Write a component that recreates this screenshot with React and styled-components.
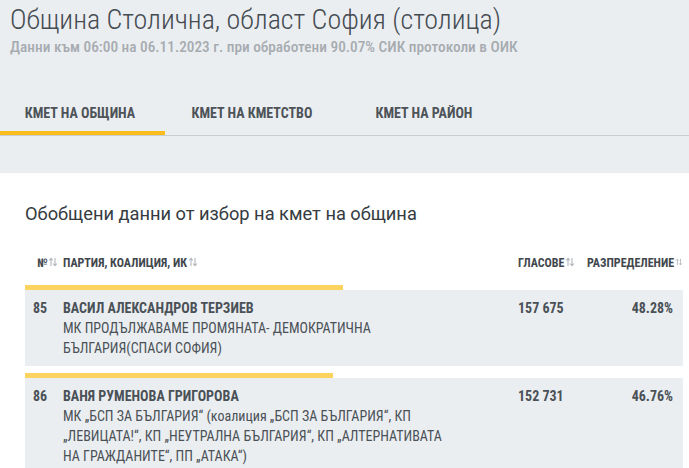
import styled, { createGlobalStyle } from "styled-components";

const candidates = [
  {
    num: 85,
    name: "ВАСИЛ АЛЕКСАНДРОВ ТЕРЗИЕВ",
    party: "МК ПРОДЪЛЖАВАМЕ ПРОМЯНАТА- ДЕМОКРАТИЧНА БЪЛГАРИЯ(СПАСИ СОФИЯ)",
    votes: "157 675",
    pct: 48.28,
  },
  {
    num: 86,
    name: "ВАНЯ РУМЕНОВА ГРИГОРОВА",
    party:
      "МК „БСП ЗА БЪЛГАРИЯ“ (коалиция „БСП ЗА БЪЛГАРИЯ“, КП „ЛЕВИЦАТА!“, КП „НЕУТРАЛНА БЪЛГАРИЯ“, КП „АЛТЕРНАТИВАТА НА ГРАЖДАНИТЕ“, ПП „АТАКА“)",
    votes: "152 731",
    pct: 46.76,
  },
];

const tabs = ["КМЕТ НА ОБЩИНА", "КМЕТ НА КМЕТСТВО", "КМЕТ НА РАЙОН"];

const SortIcon = () => (
  <SortSvg viewBox="0 0 10 10" width="10" height="10">
    <path d="M3 9V1.5M1.2 3.3L3 1.3l1.8 2" />
    <path d="M7 1v7.5M5.2 6.7L7 8.7l1.8-2" />
  </SortSvg>
);

const App = () => {
  return (
    <>
      <GlobalStyle />
      <Top>
        <Heading>
          <Title>Община Столична, област София (столица)</Title>
          <Sub>Данни към 06:00 на 06.11.2023 г. при обработени 90.07% СИК протоколи в ОИК</Sub>
        </Heading>
        <Tabs>
          {tabs.map((t, i) => (
            <Tab key={t} active={i === 0}>
              {t}
            </Tab>
          ))}
        </Tabs>
      </Top>

      <Section>
        <SectionTitle>Обобщени данни от избор на кмет на община</SectionTitle>
        <HeadRow>
          <HeadCell $pl={12}>
            №<SortIcon />
          </HeadCell>
          <HeadCell>
            ПАРТИЯ, КОАЛИЦИЯ, ИК<SortIcon />
          </HeadCell>
          <HeadCell>
            ГЛАСОВЕ<SortIcon />
          </HeadCell>
          <HeadCell>
            РАЗПРЕДЕЛЕНИЕ<SortIcon />
          </HeadCell>
        </HeadRow>

        {candidates.map((c) => (
          <Item key={c.num}>
            <Bar style={{ width: `${c.pct}%` }} />
            <Row>
              <Num>{c.num}</Num>
              <Party>
                <Name>{c.name}</Name>
                <PartyName>{c.party}</PartyName>
              </Party>
              <Votes>{c.votes}</Votes>
              <Pct>{c.pct.toFixed(2)}%</Pct>
            </Row>
          </Item>
        ))}
      </Section>
    </>
  );
};

export default App;

const GlobalStyle = createGlobalStyle`
  body {
    margin: 0;
    background: #fff;
    font-family: "Roboto Condensed", Roboto, "Noto Sans", sans-serif;
    font-stretch: condensed;
    color: #4a5157;
  }
`;

const Top = styled.div`
  background: #ebeef1;
  height: 173px;
`;

const Heading = styled.div`
  padding: 2px 10px 0;
`;

const Title = styled.h1`
  margin: 0;
  font-size: 28px;
  font-weight: 300;
  line-height: 36px;
  color: #454b51;
`;

const Sub = styled.div`
  font-size: 15.3px;
  font-weight: 500;
  color: #a6abb0;
  line-height: 18px;
`;

const Tabs = styled.div`
  display: flex;
  gap: 7px;
  margin-top: 40px;
  border-bottom: 1px solid #c9cdd1;
`;

const Tab = styled.div`
  width: 165px;
  padding-right: 5px;
  text-align: center;
  height: 39px;
  line-height: 34px;
  font-size: 14px;
  font-weight: 700;
  color: #4d5358;
  box-sizing: border-box;
  border-bottom: 4px solid ${(p) => (p.active ? "#fbbd1c" : "transparent")};
`;

const Section = styled.div`
  padding: 28px 6px 0 25px;
`;

const SectionTitle = styled.h2`
  margin: 0;
  font-family: Roboto, sans-serif;
  font-stretch: normal;
  font-size: 18.25px;
  font-weight: 400;
  color: #353b41;
  line-height: 26px;
`;

const grid = `
  display: grid;
  grid-template-columns: 38px 1fr 69px 96px;
`;

const HeadRow = styled.div`
  ${grid}
  margin-top: 26px;
  height: 32px;
`;

const HeadCell = styled.div`
  display: flex;
  align-items: center;
  font-size: 12px;
  font-weight: 700;
  color: #41474d;
  padding-left: ${(p) => p.$pl || 0}px;
  white-space: nowrap;
  align-self: start;
  height: 14px;
  margin-top: 3px;
`;

const SortSvg = styled.svg`
  margin-left: 1px;
  margin-top: -2px;
  fill: none;
  stroke: #b3b8bd;
  stroke-width: 1.1;
`;

const Item = styled.div`
  margin-bottom: 7px;
`;

const Bar = styled.div`
  height: 5px;
  background: #fcd35e;
`;

const Row = styled.div`
  ${grid}
  background: #ebeef1;
  padding: 8px 0;
  font-size: 14px;
  line-height: 20px;
`;

const Num = styled.div`
  padding-left: 8px;
  font-weight: 700;
`;

const Party = styled.div`
  max-width: 395px;
`;

const Name = styled.div`
  font-weight: 700;
`;

const PartyName = styled.div``;

const Votes = styled.div`
  font-weight: 700;
`;

const Pct = styled.div`
  font-weight: 700;
  text-align: right;
  padding-right: 10px;
`;
